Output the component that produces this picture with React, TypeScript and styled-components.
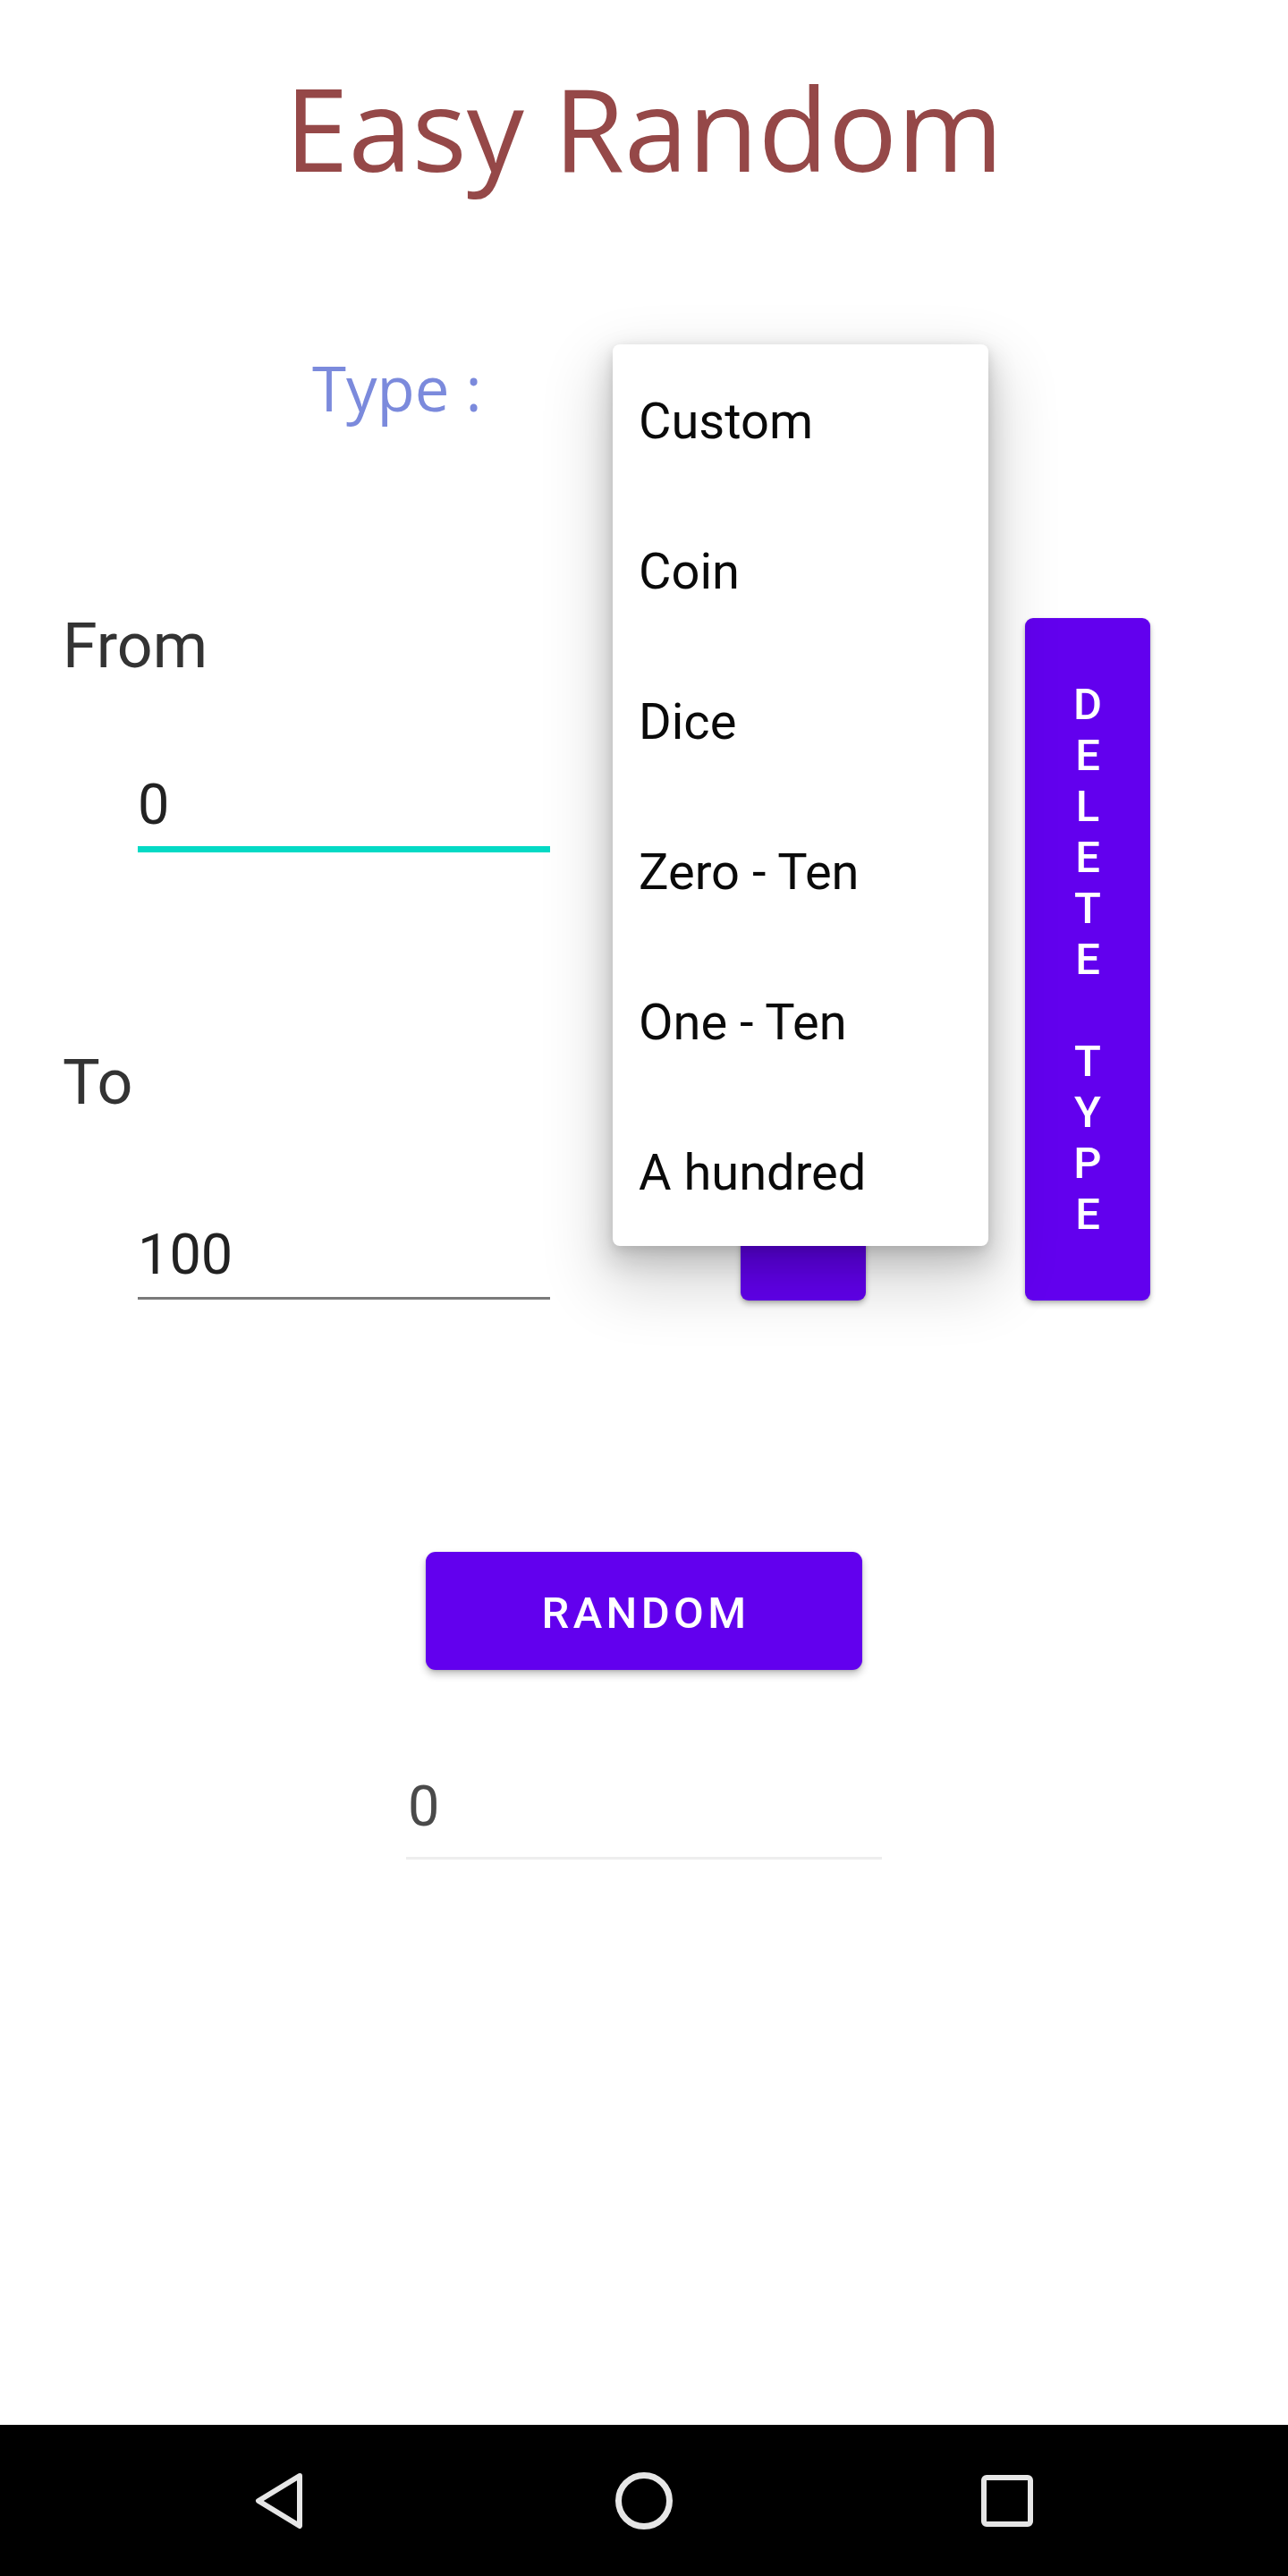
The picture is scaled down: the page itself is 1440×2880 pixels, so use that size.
import styled, { createGlobalStyle } from 'styled-components'

const GlobalStyle = createGlobalStyle`
  html, body {
    margin: 0;
    padding: 0;
    background: #ffffff;
  }
  * {
    box-sizing: border-box;
  }
`

const Screen = styled.div`
  width: 1440px;
  height: 2880px;
  display: flex;
  flex-direction: column;
  background: #ffffff;
  font-family: Roboto, 'Liberation Sans', sans-serif;
`

const Content = styled.main`
  flex: 1;
  display: flex;
  flex-direction: column;
  padding-top: 65px;
`

const Title = styled.h1`
  margin: 0;
  text-align: center;
  font-family: 'Open Sans', 'Noto Sans', sans-serif;
  font-weight: 400;
  font-size: 128px;
  line-height: 155px;
  color: #954848;
`

const TypeRow = styled.div`
  display: flex;
  align-items: flex-start;
  margin-top: 171px;
  padding-left: 349px;
`

const TypeLabel = styled.div`
  width: 336px;
  font-family: 'Open Sans', 'Noto Sans', sans-serif;
  font-size: 69px;
  line-height: 84px;
  color: #7b8adc;
`

const Spinner = styled.div`
  position: relative;
  width: 420px;
  height: 84px;
`

const Menu = styled.ul`
  position: absolute;
  top: -6px;
  left: 0;
  z-index: 10;
  width: 420px;
  margin: 0;
  padding: 0;
  list-style: none;
  background: #ffffff;
  border-radius: 8px;
  box-shadow: 0 34px 70px 12px rgba(0, 0, 0, 0.16), 0 14px 30px 4px rgba(0, 0, 0, 0.14),
    0 4px 12px rgba(0, 0, 0, 0.1);
`

const MenuItem = styled.li`
  height: 168px;
  display: flex;
  align-items: center;
  padding: 4px 0 0 29px;
  font-size: 56px;
  line-height: 66px;
  color: #0a0a0a;
`

const FormRow = styled.div`
  display: flex;
  align-items: flex-end;
  margin-top: 206px;
  padding-left: 70px;
`

const Fields = styled.div`
  width: 545px;
  display: flex;
  flex-direction: column;
  padding-bottom: 1.5px;
`

const FieldLabel = styled.div<{ $gap?: number }>`
  margin-top: ${({ $gap }) => $gap ?? 0}px;
  font-size: 70px;
  line-height: 82px;
  color: #333333;
`

const Field = styled.div<{ $focused?: boolean; $gap: number }>`
  margin-top: ${({ $gap }) => $gap}px;
  margin-left: 84px;
  padding-bottom: ${({ $focused }) => ($focused ? 9 : 9.5)}px;
  font-size: 63px;
  line-height: 74px;
  color: #222222;
  border-bottom: ${({ $focused }) => ($focused ? '7px solid #03dac5' : '3.5px solid #7a7a7a')};
`

const SideButton = styled.button<{ $gap: number }>`
  flex: none;
  width: 140px;
  height: 763px;
  margin-left: ${({ $gap }) => $gap}px;
  padding: 0;
  border: none;
  border-radius: 9px;
  background: #6200ee;
  box-shadow: 0 4px 6px rgba(0, 0, 0, 0.24), 0 1px 3px rgba(0, 0, 0, 0.14);
  display: flex;
  flex-direction: column;
  align-items: center;
  justify-content: center;
  font-family: Roboto, 'Liberation Sans', sans-serif;
`

const VerticalLetter = styled.span`
  display: block;
  height: 57px;
  font-size: 49px;
  line-height: 57px;
  font-weight: 500;
  color: #ffffff;
`

const RandomButton = styled.button`
  align-self: center;
  width: 488px;
  height: 132px;
  margin-top: 281px;
  border: none;
  border-radius: 11px;
  background: #6200ee;
  box-shadow: 0 5px 8px rgba(0, 0, 0, 0.24), 0 1px 3px rgba(0, 0, 0, 0.14);
  font-family: Roboto, 'Liberation Sans', sans-serif;
  font-size: 49px;
  font-weight: 500;
  letter-spacing: 4.4px;
  color: #ffffff;
  padding: 4px 0 0 4px;
`

const Result = styled.div`
  align-self: center;
  width: 532px;
  margin-top: 116px;
  padding: 0 0 19px 2px;
  font-size: 63px;
  line-height: 74px;
  color: #4a4a4a;
  border-bottom: 3px solid #eeeeee;
`

const NavBar = styled.nav`
  height: 169px;
  background: #000000;
  display: flex;
  align-items: center;
  justify-content: center;
  gap: 342px;
`

const NavIcon = styled.svg`
  width: 64px;
  height: 64px;
  display: block;
`

const types = ['Custom', 'Coin', 'Dice', 'Zero - Ten', 'One - Ten', 'A hundred']
const deleteLetters = ['D', 'E', 'L', 'E', 'T', 'E', '', 'T', 'Y', 'P', 'E']

export default function App() {
  return (
    <Screen>
      <GlobalStyle />
      <Content>
        <Title>Easy Random</Title>

        <TypeRow>
          <TypeLabel>Type :</TypeLabel>
          <Spinner>
            <Menu>
              {types.map((t) => (
                <MenuItem key={t}>{t}</MenuItem>
              ))}
            </Menu>
          </Spinner>
        </TypeRow>

        <FormRow>
          <Fields>
            <FieldLabel>From</FieldLabel>
            <Field $focused $gap={100}>
              0
            </Field>
            <FieldLabel $gap={216}>To</FieldLabel>
            <Field $gap={115}>100</Field>
          </Fields>
          <SideButton $gap={213} aria-label="Add type" />
          <SideButton $gap={178}>
            {deleteLetters.map((l, i) => (
              <VerticalLetter key={i}>{l}</VerticalLetter>
            ))}
          </SideButton>
        </FormRow>

        <RandomButton>RANDOM</RandomButton>
        <Result>0</Result>
      </Content>

      <NavBar>
        <NavIcon viewBox="0 0 64 64" fill="none" stroke="#e6e6e6" strokeWidth="6" strokeLinejoin="round">
          <path d="M53 4 L7 32 L53 60 Z" />
        </NavIcon>
        <NavIcon viewBox="0 0 64 64" fill="none" stroke="#e6e6e6" strokeWidth="7">
          <circle cx="32" cy="32" r="28.5" />
        </NavIcon>
        <NavIcon viewBox="0 0 64 64" fill="none" stroke="#e6e6e6" strokeWidth="6">
          <rect x="6" y="6" width="52" height="52" rx="3" />
        </NavIcon>
      </NavBar>
    </Screen>
  )
}
